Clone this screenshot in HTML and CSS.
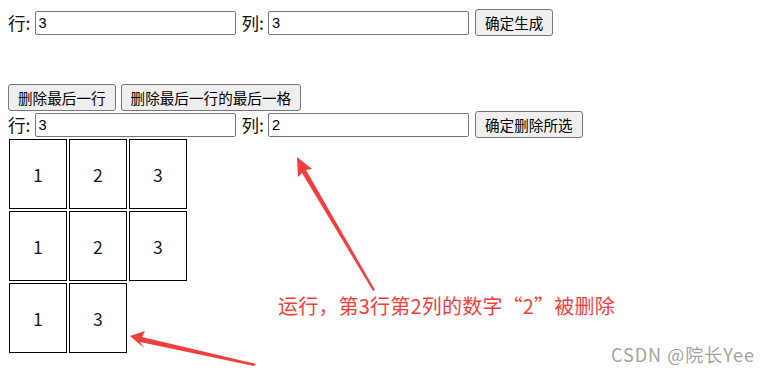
FILE: index.html
```html
<!DOCTYPE html>
<html lang="zh">
<head>
<meta charset="utf-8">
<title>表格</title>
<link rel="stylesheet" href="styles.css">
</head>
<body>
<div class="page">
  <div class="row">
    <span class="label">行:</span>
    <input class="field" type="text" value="3">
    <span class="label label-gap">列:</span>
    <input class="field" type="text" value="3">
    <button class="btn btn-gap">确定生成</button>
  </div>

  <div class="section">
    <div class="row">
      <button class="btn">删除最后一行</button>
      <button class="btn btn-small-gap">删除最后一行的最后一格</button>
    </div>
    <div class="row">
      <span class="label">行:</span>
      <input class="field" type="text" value="3">
      <span class="label label-gap">列:</span>
      <input class="field" type="text" value="2">
      <button class="btn btn-gap">确定删除所选</button>
    </div>
  </div>

  <div class="grid">
    <div class="grid-row">
      <div class="cell">1</div><div class="cell">2</div><div class="cell">3</div>
    </div>
    <div class="grid-row">
      <div class="cell">1</div><div class="cell">2</div><div class="cell">3</div>
    </div>
    <div class="grid-row">
      <div class="cell">1</div><div class="cell">3</div>
    </div>
  </div>
</div>

<svg class="overlay" width="771" height="374" viewBox="0 0 771 374">
  <polygon class="arrow" points="297,157 312,169 306,170 375,290 373,291 302,173 298,177"/>
  <polygon class="arrow" points="130,336 145,331 142,337 256,364 254,366 140,342 144,348"/>
</svg>
<div class="note">运行，第3行第2列的数字“2”被删除</div>
<div class="watermark">CSDN @院长Yee</div>
</body>
</html>
```

FILE: styles.css
```css
html, body {
  margin: 0;
  padding: 0;
  background: #ffffff;
}

body {
  width: 771px;
  height: 374px;
  overflow: hidden;
  position: relative;
  font-family: "Noto Sans CJK SC", "Noto Sans", sans-serif;
  color: #000;
}

.page {
  padding: 9px 8px 0 8px;
}

.row {
  display: flex;
  align-items: center;
  height: 27px;
}

.label {
  font-size: 17.6px;
  line-height: 20px;
  margin-right: 4px;
  color: #111;
}

.label-gap {
  margin-left: 6px;
}

.field {
  box-sizing: border-box;
  width: 201px;
  height: 24px;
  margin: 0;
  padding: 0 3px;
  border: 1px solid #767676;
  border-radius: 2px;
  font-family: "Liberation Sans", Arial, sans-serif;
  font-size: 14.6px;
  color: #000;
  background: #fff;
}

.btn {
  box-sizing: border-box;
  height: 27px;
  margin: 0;
  padding: 0 9px;
  border: 1px solid #767676;
  border-radius: 3px;
  background: #efefef;
  font-family: "Noto Sans CJK SC", sans-serif;
  font-size: 14.6px;
  line-height: 18px;
  color: #000;
}

.btn-gap {
  margin-left: 6px;
}

.btn-small-gap {
  margin-left: 5px;
}

.section {
  margin-top: 48px;
}

.grid {
  display: flex;
  flex-direction: column;
  gap: 2px;
  margin-top: 1px;
  margin-left: 1px;
}

.grid-row {
  display: flex;
  gap: 2px;
}

.cell {
  box-sizing: border-box;
  width: 58px;
  height: 70px;
  border: 1px solid #000;
  display: flex;
  align-items: center;
  justify-content: center;
  font-family: "Noto Sans CJK SC", sans-serif;
  font-size: 17.6px;
  color: #1a1a1a;
}

.overlay {
  position: absolute;
  left: 0;
  top: 0;
  pointer-events: none;
}

.arrow {
  fill: #f43e3e;
}

.note {
  position: absolute;
  left: 278px;
  top: 294px;
  font-family: "Noto Sans CJK SC", sans-serif;
  font-size: 20px;
  line-height: 24px;
  letter-spacing: 0.2px;
  color: #f43e3e;
  white-space: nowrap;
}

.watermark {
  position: absolute;
  left: 611px;
  top: 343px;
  font-family: "Noto Sans CJK SC", sans-serif;
  font-size: 18px;
  line-height: 22px;
  letter-spacing: 1px;
  color: #a3a3a3;
  white-space: nowrap;
}
```
